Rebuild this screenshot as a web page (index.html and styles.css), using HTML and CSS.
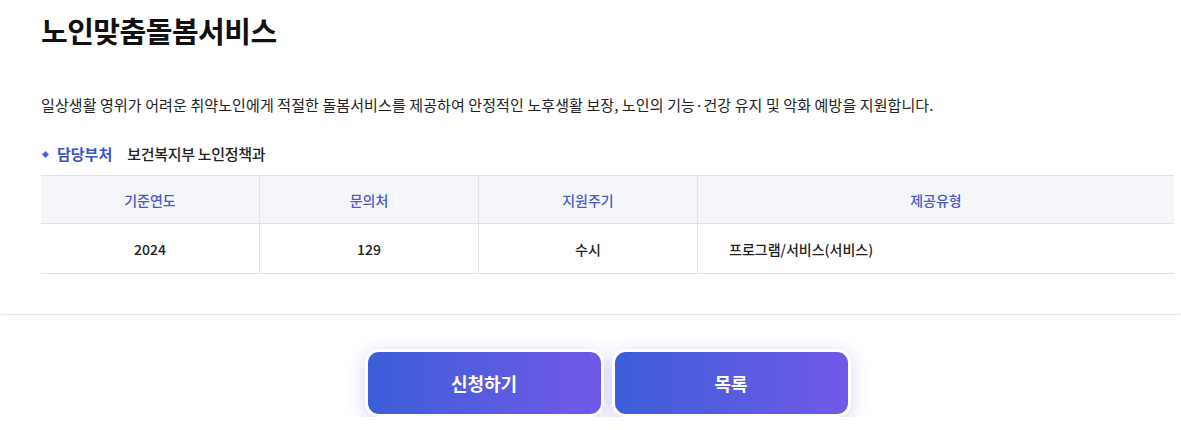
FILE: index.html
```html
<!DOCTYPE html>
<html>

<head>
    <link rel="stylesheet" href="styles.css">
</head>

<body>
    <div class="card">
        <h1 class="title">노인맞춤돌봄서비스</h1>
        <p class="desc">일상생활 영위가 어려운 취약노인에게 적절한 돌봄서비스를 제공하여 안정적인 노후생활 보장, 노인의 기능·건강 유지 및 악화 예방을 지원합니다.</p>
        <div class="dept">
            <span class="dept-label">담당부처</span>
            <span class="dept-name">보건복지부 노인정책과</span>
        </div>
        <table class="info">
            <thead>
                <tr>
                    <th class="col-s">기준연도</th>
                    <th class="col-s">문의처</th>
                    <th class="col-s">지원주기</th>
                    <th>제공유형</th>
                </tr>
            </thead>
            <tbody>
                <tr>
                    <td>2024</td>
                    <td>129</td>
                    <td>수시</td>
                    <td class="left">프로그램/서비스(서비스)</td>
                </tr>
            </tbody>
        </table>
    </div>
    <div class="actions">
        <a class="btn" href="#">신청하기</a>
        <a class="btn" href="#">목록</a>
    </div>
</body>

</html>
```

FILE: styles.css
```css
html,
body {
    margin: 0;
    overflow: hidden;
}

body {
    background-color: #ffffff;
    font-family: 'Noto Sans CJK KR', 'Noto Sans', sans-serif;
    color: #222222;
}

.card {
    margin: 0 -16px;
    padding: 8px 22px 40px 56px;
    border: 1px solid #e3e3e6;
    border-top: none;
    border-radius: 0 0 22px 22px;
}

.title {
    margin: 0;
    font-size: 29px;
    line-height: 44px;
    font-weight: 700;
    letter-spacing: -0.5px;
    color: #111111;
}

.desc {
    margin: 42px 0 0;
    font-size: 15px;
    line-height: 22px;
    letter-spacing: 0.1px;
    color: #222222;
}

.dept {
    margin-top: 27px;
    display: flex;
    align-items: center;
    font-size: 15px;
    line-height: 22px;
    font-weight: 500;
}

.dept-label {
    position: relative;
    padding-left: 16px;
    color: #3b54c7;
    font-weight: 700;
}

.dept-label::before {
    content: '';
    position: absolute;
    left: 2px;
    top: 9px;
    width: 5px;
    height: 5px;
    background: #4a63d4;
    transform: rotate(45deg);
}

.dept-name {
    margin-left: 15px;
    letter-spacing: -0.3px;
}

.info {
    width: 100%;
    margin-top: 10px;
    border-collapse: collapse;
    font-size: 14px;
}

.info th,
.info td {
    border: 1px solid #e1e2e6;
    border-left: none;
    text-align: center;
    font-weight: 500;
}

.info th:last-child,
.info td:last-child {
    border-right: none;
}

.info th {
    height: 45px;
    background: #f5f6fa;
    color: #4a5bc6;
}

.info td {
    height: 47px;
    color: #222222;
}

.info .col-s {
    width: 216px;
}

.info td.left {
    text-align: left;
    padding-left: 31px;
}

.actions {
    display: flex;
    justify-content: center;
    gap: 8px;
    padding: 34px 6px 0 40px;
}

.btn {
    display: flex;
    align-items: center;
    justify-content: center;
    width: 233px;
    height: 62px;
    border: 3px solid #ffffff;
    border-radius: 14px;
    background: linear-gradient(90deg, #3d5ed8, #7159e7);
    box-shadow: 0 4px 18px rgba(96, 86, 220, 0.28);
    color: #ffffff;
    font-size: 18px;
    font-weight: 700;
    text-decoration: none;
}
```
